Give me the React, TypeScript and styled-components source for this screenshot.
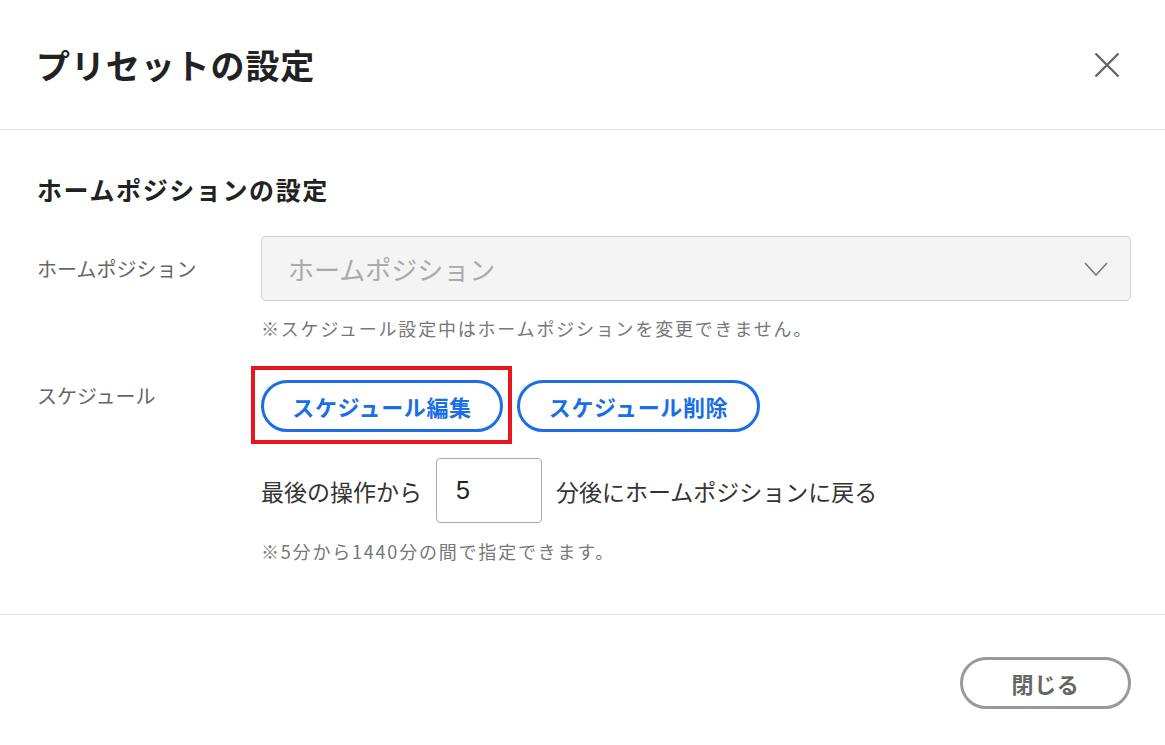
import styled, { createGlobalStyle } from "styled-components";

const GlobalStyle = createGlobalStyle`
  html, body {
    margin: 0;
    padding: 0;
    background: #fff;
  }
  body {
    font-family: "Noto Sans CJK JP", "Noto Sans", sans-serif;
    color: #333;
  }
`;

const Dialog = styled.div`
  width: 1165px;
  height: 745px;
  background: #fff;
  display: flex;
  flex-direction: column;
  box-sizing: border-box;
`;

const Header = styled.header`
  height: 129px;
  border-bottom: 1px solid #e6e6e6;
  display: flex;
  align-items: center;
  justify-content: space-between;
  padding: 0 44px 0 36px;
`;

const Title = styled.h1`
  margin: 0;
  font-size: 34px;
  font-weight: 700;
  color: #222;
  letter-spacing: 0.9px;
`;

const CloseIcon = styled.button`
  width: 28px;
  height: 28px;
  padding: 0;
  border: none;
  background: none;
  display: flex;
  align-items: center;
  justify-content: center;
  cursor: pointer;
`;

const Body = styled.section`
  flex: 1;
  padding: 42px 34px 0 37px;
  border-bottom: 1px solid #e6e6e6;
`;

const SectionTitle = styled.h2`
  margin: 0 0 30px;
  font-size: 25px;
  line-height: 34px;
  font-weight: 700;
  letter-spacing: 1.6px;
  color: #222;
`;

const FormRow = styled.div<{ $gap?: number }>`
  display: grid;
  grid-template-columns: 224px 1fr;
  margin-bottom: ${(p) => p.$gap ?? 0}px;
`;

const Label = styled.div<{ $center?: boolean }>`
  font-size: 20px;
  line-height: 28px;
  color: #666;
  align-self: ${(p) => (p.$center ? "center" : "start")};
  padding-top: ${(p) => (p.$center ? 0 : 2)}px;
`;

const Field = styled.div`
  display: flex;
  flex-direction: column;
`;

const Select = styled.div`
  height: 65px;
  box-sizing: border-box;
  background: #f4f4f4;
  border: 1px solid #cfcfcf;
  border-radius: 5px;
  display: flex;
  align-items: center;
  justify-content: space-between;
  padding: 0 22px 0 26px;
  font-size: 26px;
  color: #aaa;
`;

const Note = styled.p<{ $top: number }>`
  grid-column: 2;
  margin: ${(p) => p.$top}px 0 0;
  font-size: 18px;
  line-height: 24px;
  letter-spacing: 1.8px;
  color: #777;
`;

const ButtonGroup = styled.div`
  display: flex;
  gap: 14px;
  margin-bottom: 26px;
`;

const Highlight = styled.div`
  position: relative;
`;

const Marker = styled.span`
  position: absolute;
  left: -10px;
  top: -14px;
  right: -9px;
  bottom: -12px;
  border: 4px solid #e8161e;
  pointer-events: none;
`;

const PillButton = styled.button<{ $tone: "blue" | "gray"; $width: number }>`
  width: ${(p) => p.$width}px;
  height: 52px;
  box-sizing: border-box;
  border: 3px solid ${(p) => (p.$tone === "blue" ? "#1a6ee6" : "#9a9a9a")};
  border-radius: 26px;
  background: #fff;
  color: ${(p) => (p.$tone === "blue" ? "#1a6ee6" : "#666")};
  font-family: inherit;
  font-size: 22px;
  letter-spacing: 0.6px;
  font-weight: 700;
  display: flex;
  align-items: center;
  justify-content: center;
  padding: 0;
  cursor: pointer;
`;

const InlineRow = styled.div`
  display: flex;
  align-items: center;
  gap: 14px;
  font-size: 23px;
  color: #333;
`;

const NumberInput = styled.input`
  width: 106px;
  height: 65px;
  box-sizing: border-box;
  border: 1px solid #aaa;
  border-radius: 4px;
  padding: 0 0 0 19px;
  font-family: "Liberation Sans", Arial, sans-serif;
  font-size: 25px;
  color: #222;
  outline: none;
`;

const Footer = styled.footer`
  height: 130px;
  display: flex;
  justify-content: flex-end;
  align-items: flex-start;
  padding: 42px 34px 0 0;
  box-sizing: border-box;
`;

export default function App() {
  return (
    <>
      <GlobalStyle />
      <Dialog>
        <Header>
          <Title>プリセットの設定</Title>
          <CloseIcon aria-label="close">
            <svg width="26" height="26" viewBox="0 0 26 26">
              <path
                d="M1.5 1.5 L24.5 24.5 M24.5 1.5 L1.5 24.5"
                stroke="#666"
                strokeWidth="2.4"
                fill="none"
              />
            </svg>
          </CloseIcon>
        </Header>
        <Body>
          <SectionTitle>ホームポジションの設定</SectionTitle>
          <FormRow>
            <Label $center>ホームポジション</Label>
            <Select>
              <span>ホームポジション</span>
              <svg width="24" height="14" viewBox="0 0 24 14">
                <path d="M1 1 L12 13 L23 1" stroke="#777" strokeWidth="1.6" fill="none" />
              </svg>
            </Select>
          </FormRow>
          <FormRow $gap={40}>
            <Note $top={15}>※スケジュール設定中はホームポジションを変更できません。</Note>
          </FormRow>
          <FormRow>
            <Label>スケジュール</Label>
            <Field>
              <ButtonGroup>
                <Highlight>
                  <PillButton $tone="blue" $width={242}>スケジュール編集</PillButton>
                  <Marker />
                </Highlight>
                <PillButton $tone="blue" $width={243}>スケジュール削除</PillButton>
              </ButtonGroup>
              <InlineRow>
                <span>最後の操作から</span>
                <NumberInput defaultValue="5" />
                <span>分後にホームポジションに戻る</span>
              </InlineRow>
              <Note $top={16}>※5分から1440分の間で指定できます。</Note>
            </Field>
          </FormRow>
        </Body>
        <Footer>
          <PillButton $tone="gray" $width={171}>閉じる</PillButton>
        </Footer>
      </Dialog>
    </>
  );
}
